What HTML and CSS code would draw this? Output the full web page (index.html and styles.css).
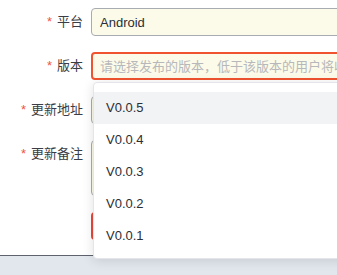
FILE: index.html
```html
<!DOCTYPE html>
<html lang="zh-CN">

<head>
    <meta charset="UTF-8">
    <meta name="viewport" content="width=device-width, initial-scale=1.0">
    <title>发布新版本</title>
    <link rel="stylesheet" href="styles.css">
</head>

<body>
    <div class="main">
        <form class="release-form">
            <div class="form-row">
                <label class="form-label"><span class="required">*</span>平台</label>
                <div class="form-field">
                    <input type="text" class="form-input" value="Android">
                </div>
            </div>

            <div class="form-row">
                <label class="form-label"><span class="required">*</span>版本</label>
                <div class="form-field">
                    <input type="text" class="form-input is-error" placeholder="请选择发布的版本，低于该版本的用户将收到更新提示">
                    <!-- 版本下拉列表 -->
                    <ul class="version-dropdown">
                        <li class="hover">V0.0.5</li>
                        <li>V0.0.4</li>
                        <li>V0.0.3</li>
                        <li>V0.0.2</li>
                        <li>V0.0.1</li>
                    </ul>
                </div>
            </div>

            <div class="form-row">
                <label class="form-label"><span class="required">*</span>更新地址</label>
                <div class="form-field">
                    <input type="text" class="form-input">
                </div>
            </div>

            <div class="form-row">
                <label class="form-label"><span class="required">*</span>更新备注</label>
                <div class="form-field">
                    <textarea class="form-textarea"></textarea>
                </div>
            </div>

            <div class="form-row">
                <div class="form-label"></div>
                <div class="form-field">
                    <button type="button" class="submit-btn">发布</button>
                </div>
            </div>
        </form>
    </div>

    <footer class="footer"></footer>
</body>

</html>
```

FILE: styles.css
```css
body {
    font-family: "Liberation Sans", "Noto Sans CJK SC", sans-serif;
    font-size: 13px;
    color: #3a3d44;
    margin: 0;
    padding: 0;
    overflow: hidden;
    background-color: #ffffff;
}

.main {
    height: 255px;
    background-color: #ffffff;
}

.release-form {
    width: 560px;
    padding-top: 8px;
}

.form-row {
    display: flex;
    align-items: flex-start;
    gap: 8px;
    margin-bottom: 16px;
}

.form-label {
    width: 83px;
    flex: none;
    text-align: right;
    line-height: 28px;
    color: #3a3d44;
}

.required {
    color: #f0563a;
    margin-right: 5px;
}

.form-field {
    flex: 1;
    position: relative;
}

.form-input {
    display: block;
    box-sizing: border-box;
    width: 100%;
    height: 28px;
    padding: 0 8px;
    font-family: inherit;
    font-size: 13px;
    color: #2b2e35;
    background-color: #fcfbe9;
    border: 1px solid #a8abb2;
    border-radius: 4px;
    outline: none;
}

.form-input.is-error {
    border: 2px solid #f0532f;
    padding: 0 7px;
}

.form-input::placeholder {
    color: #b7b8bb;
}

.form-textarea {
    display: block;
    box-sizing: border-box;
    width: 100%;
    height: 56px;
    padding: 4px 8px;
    font-family: inherit;
    font-size: 13px;
    background-color: #fcfbe9;
    border: 1px solid #a8abb2;
    border-radius: 4px;
    resize: none;
}

.submit-btn {
    height: 28px;
    padding: 0 18px;
    font-family: inherit;
    font-size: 13px;
    color: #ffffff;
    background-color: #e8473a;
    border: none;
    border-radius: 4px;
}

.version-dropdown {
    position: absolute;
    top: calc(100% + 2px);
    left: 2px;
    width: 320px;
    margin: 0;
    padding: 9px 0 6px;
    list-style: none;
    background-color: #ffffff;
    border: 1px solid #e4e5ea;
    border-radius: 4px;
    box-shadow: 0 2px 12px rgba(0, 0, 0, 0.12);
    z-index: 10;
}

.version-dropdown li {
    height: 32px;
    line-height: 32px;
    padding-left: 12px;
    color: #2b2e35;
    cursor: pointer;
}

.version-dropdown li.hover {
    background-color: #f2f3f5;
}

.footer {
    height: 40px;
    border-top: 1px solid #5d626d;
    background-color: #e2e7ee;
}
```
